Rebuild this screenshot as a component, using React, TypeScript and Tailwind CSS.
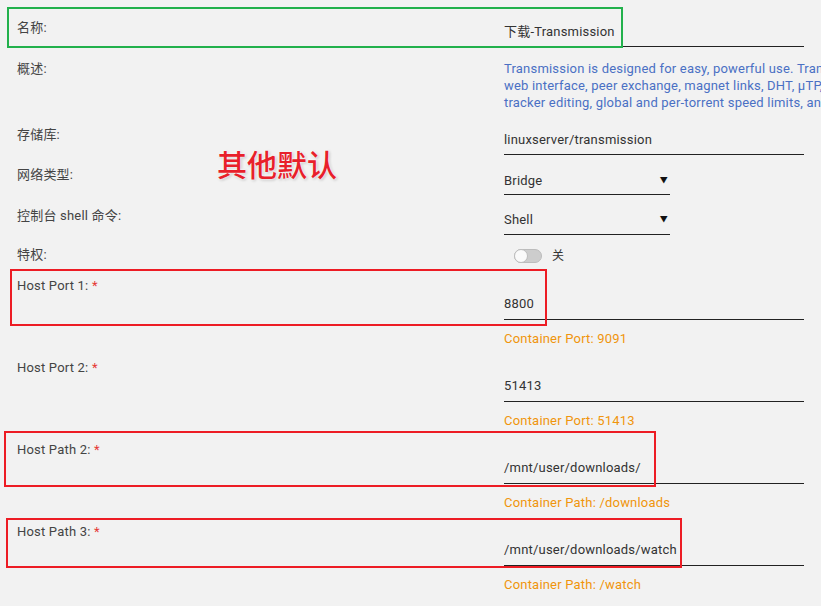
import React from "react";

const font = { fontFamily: "Roboto, 'Noto Sans CJK SC', sans-serif" };

interface FieldProps {
  label: React.ReactNode;
  labelPad: string;
  children: React.ReactNode;
}

// one dt/dd pair, label left, control right
const Field: React.FC<FieldProps> = ({ label, labelPad, children }) => (
  <div className="flex">
    <div className={`w-[487px] shrink-0 leading-4 text-[#444] ${labelPad}`}>{label}</div>
    <div className="w-[300px] shrink-0">{children}</div>
  </div>
);

const Req: React.FC<{ text: string }> = ({ text }) => (
  <span>
    {text} <span className="text-[#e53935]">*</span>
  </span>
);

const HostField: React.FC<{ name: string; value: string; note: string }> = ({ name, value, note }) => (
  <div className="flex h-[82px]">
    <div className="w-[487px] shrink-0 pt-[7px] leading-4 text-[#444]">
      <Req text={name} />
    </div>
    <div className="w-[300px] shrink-0">
      <div className="mt-[25px] pb-[7px] leading-4 text-[#333] border-b border-[#222]">{value}</div>
      <div className="mt-[11px] leading-4 text-[#f0950c]">{note}</div>
    </div>
  </div>
);

export default function App() {
  return (
    <div className="relative w-[821px] h-[606px] overflow-hidden bg-[#f2f2f2] text-[13px] tracking-[0.2px]" style={font}>
      <div className="pl-[17px] pt-[1px]">
        <Field label="名称:" labelPad="pt-[19px]">
          <div className="pt-[23px] pb-[6px] leading-4 text-[#333] border-b border-[#222]">下载-Transmission</div>
        </Field>

        <div className="flex">
          <div className="w-[487px] shrink-0 pt-[14px] leading-4 text-[#444]">概述:</div>
          <div className="mt-[13px] leading-[17px] text-[#4a70c4] whitespace-nowrap">
            <div>Transmission is designed for easy, powerful use. Transmission has the features you want from a BitTorrent client: encryption, a</div>
            <div>web interface, peer exchange, magnet links, DHT, µTP, UPnP and NAT-PMP port forwarding, webseed support, watch directories,</div>
            <div>tracker editing, global and per-torrent speed limits, and more.</div>
          </div>
        </div>

        <Field label="存储库:" labelPad="pt-[16px]">
          <div className="pt-[21px] pb-[6px] leading-4 text-[#333] border-b border-[#222]">linuxserver/transmission</div>
        </Field>

        <Field label="网络类型:" labelPad="pt-[12px]">
          <div className="mt-[18px] w-[166px] pb-[5px] pr-[2px] flex justify-between items-center leading-4 text-[#333] border-b border-[#222]">
            <span>Bridge</span>
            <span className="text-[8px] leading-4 text-[#111]">▼</span>
          </div>
        </Field>

        <Field label="控制台 shell 命令:" labelPad="pt-[13px]">
          <div className="mt-[17px] w-[166px] pb-[6px] pr-[2px] flex justify-between items-center leading-4 text-[#333] border-b border-[#222]">
            <span>Shell</span>
            <span className="text-[8px] leading-4 text-[#111]">▼</span>
          </div>
        </Field>

        <div className="flex h-[36px]">
          <div className="w-[487px] shrink-0 pt-[12px] leading-4 text-[#444]">特权:</div>
          <div className="pt-[12px] pl-[10px] flex items-center gap-[10px] h-[29px]">
            <div className="w-[28px] h-[14px] rounded-full bg-[#cdcdcd] border border-[#bcbcbc] flex items-center">
              <div className="w-[14px] h-[14px] -ml-px rounded-full bg-[#fafafa] border border-[#bcbcbc]" />
            </div>
            <span className="leading-4 text-[#333] text-[12px]">关</span>
          </div>
        </div>

        <HostField name="Host Port 1:" value="8800" note="Container Port: 9091" />
        <HostField name="Host Port 2:" value="51413" note="Container Port: 51413" />
        <HostField name="Host Path 2:" value="/mnt/user/downloads/" note="Container Path: /downloads" />
        <HostField name="Host Path 3:" value="/mnt/user/downloads/watch" note="Container Path: /watch" />
      </div>

      {/* screenshot annotations */}
      <div className="absolute left-[7px] top-[7px] w-[616px] h-[41px] border-2 border-[#22b14c]" />
      <div className="absolute left-[10px] top-[269px] w-[537px] h-[57px] border-2 border-[#ed1c24]" />
      <div className="absolute left-[4px] top-[431px] w-[652px] h-[56px] border-2 border-[#ed1c24]" />
      <div className="absolute left-[6px] top-[518px] w-[676px] h-[50px] border-2 border-[#ed1c24]" />
      <div
        className="absolute left-[217px] top-[145px] text-[30px] font-medium leading-9 tracking-normal text-[#e8202a] [text-shadow:0_0_2px_#fff,0_0_3px_#fff,1px_1px_3px_rgba(0,0,0,0.3)]"
        style={{ fontFamily: "'Noto Sans CJK SC', sans-serif" }}
      >
        其他默认
      </div>
    </div>
  );
}
